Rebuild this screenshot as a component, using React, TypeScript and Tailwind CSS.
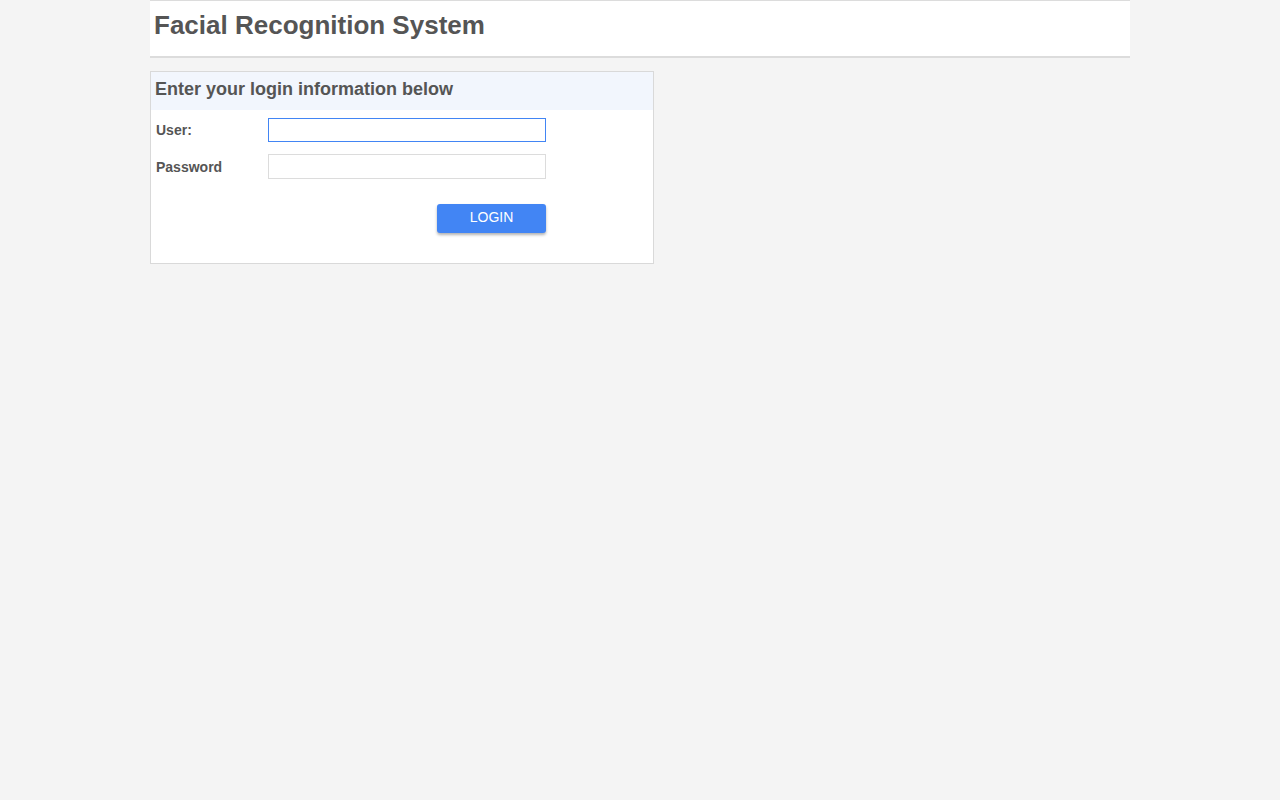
export default function App() {
  return (
    <div className="min-h-screen bg-[#f4f4f4] font-['Liberation_Sans',Arial,sans-serif] text-[#555]">
      <div className="mx-auto w-[980px]">
        <header className="h-[58px] border-t border-b-2 border-[#dcdcdc] bg-white px-[4px] pt-[8px]">
          <h1 className="text-[26px] font-bold leading-[32px]">Facial Recognition System</h1>
        </header>

        <section className="mt-[13px] h-[193px] w-[504px] border border-[#d9d9d9] bg-white">
          <div className="h-[38px] bg-[#f2f6fd] pl-[4px] pt-[6px]">
            <h2 className="text-[18px] font-bold leading-[22px]">Enter your login information below</h2>
          </div>

          <form className="pl-[5px] pt-[8px]">
            <Row label="User:">
              <input type="text" className="h-[24px] w-[278px] border border-[#4285f4] bg-white outline-none" />
            </Row>
            <Row label="Password" className="mt-[12px]">
              <input type="password" className="h-[25px] w-[278px] border border-[#dcdcdc] bg-white outline-none" />
            </Row>
            <div className="mt-[25px] flex w-[390px] justify-end">
              <button type="button" className="h-[29px] w-[109px] rounded-[3px] bg-[#4285f4] pb-[3px] text-[14px] text-white shadow-[0_2px_3px_rgba(0,0,0,0.3)]">
                LOGIN
              </button>
            </div>
          </form>
        </section>
      </div>
    </div>
  );
}

function Row({ label, className = '', children }: { label: string; className?: string; children: React.ReactNode }) {
  return (
    <div className={`flex items-center ${className}`}>
      <label className="w-[112px] pt-[1px] text-[14px] font-bold">{label}</label>
      {children}
    </div>
  );
}
